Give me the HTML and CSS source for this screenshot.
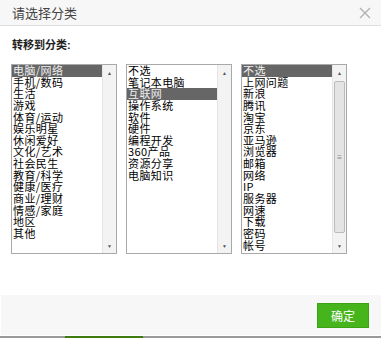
FILE: index.html
```html
<html>
<head>
<meta charset="utf-8">
<link rel="stylesheet" href="styles.css">
</head>
<body>
<div class="dialog">
	<div class="head">
		<span class="title">请选择分类</span>
		<svg class="close" width="12" height="12" viewBox="0 0 12 12"><path d="M1 1L11 11M11 1L1 11" stroke="#b0b0b0" stroke-width="1.3" fill="none"/></svg>
	</div>
	<div class="main">
		<div class="label">转移到分类:</div>
		<div class="lists">
			<div class="box">
				<div class="items">
					<div class="item sel">电脑/网络</div>
					<div class="item">手机/数码</div>
					<div class="item">生活</div>
					<div class="item">游戏</div>
					<div class="item">体育/运动</div>
					<div class="item">娱乐明星</div>
					<div class="item">休闲爱好</div>
					<div class="item">文化/艺术</div>
					<div class="item">社会民生</div>
					<div class="item">教育/科学</div>
					<div class="item">健康/医疗</div>
					<div class="item">商业/理财</div>
					<div class="item">情感/家庭</div>
					<div class="item">地区</div>
					<div class="item">其他</div>
				</div>
				<div class="bar">
					<div class="arr up">&#9650;</div>
					<div class="track"></div>
					<div class="arr">&#9660;</div>
				</div>
			</div>
			<div class="box">
				<div class="items">
					<div class="item">不选</div>
					<div class="item">笔记本电脑</div>
					<div class="item sel">互联网</div>
					<div class="item">操作系统</div>
					<div class="item">软件</div>
					<div class="item">硬件</div>
					<div class="item">编程开发</div>
					<div class="item">360产品</div>
					<div class="item">资源分享</div>
					<div class="item">电脑知识</div>
				</div>
				<div class="bar">
					<div class="arr up">&#9650;</div>
					<div class="track"></div>
					<div class="arr">&#9660;</div>
				</div>
			</div>
			<div class="box">
				<div class="items">
					<div class="item sel">不选</div>
					<div class="item">上网问题</div>
					<div class="item">新浪</div>
					<div class="item">腾讯</div>
					<div class="item">淘宝</div>
					<div class="item">京东</div>
					<div class="item">亚马逊</div>
					<div class="item">浏览器</div>
					<div class="item">邮箱</div>
					<div class="item">网络</div>
					<div class="item">IP</div>
					<div class="item">服务器</div>
					<div class="item">网速</div>
					<div class="item">下载</div>
					<div class="item">密码</div>
					<div class="item">帐号</div>
				</div>
				<div class="bar">
					<div class="arr up">&#9650;</div>
					<div class="track"><div class="thumb"><span class="grip">&#8801;</span></div></div>
					<div class="arr">&#9660;</div>
				</div>
			</div>
		</div>
	</div>
	<div class="foot">
		<span class="ok">确定</span>
	</div>
	<div class="under"><span class="green"></span></div>
</div>
</body>
</html>
```

FILE: styles.css
```css
body {
	margin: 0;
	background-color: #fff;
	font-family: "Liberation Sans", "Noto Sans CJK SC", sans-serif;
}
.dialog {
	width: 381px;
	height: 338px;
	display: flex;
	flex-direction: column;
	overflow: hidden;
}
.head {
	height: 25px;
	background-color: #f7f7f7;
	border-bottom: 1px solid #dedede;
	display: flex;
	align-items: center;
	justify-content: space-between;
	padding: 0 10px 0 12px;
}
.title {
	font-size: 13px;
	color: #444;
}
.main {
	flex: 1;
	padding: 0 0 0 11px;
}
.label {
	font-size: 11px;
	font-weight: bold;
	color: #222;
	margin: 13px 0 0 1px;
	height: 13px;
	line-height: 13px;
}
.lists {
	display: flex;
	gap: 9px;
	margin-top: 12px;
}
.box {
	width: 106px;
	height: 190px;
	box-sizing: border-box;
	border: 1px solid #a9a9a9;
	display: flex;
	background-color: #fff;
}
.items {
	flex: 1;
	overflow: hidden;
	font-family: "Noto Sans CJK SC", sans-serif;
	font-size: 11px;
	letter-spacing: 0.4px;
	color: #000;
}
.item {
	height: 11.65px;
	line-height: 11.65px;
	white-space: nowrap;
	padding-left: 1px;
}
.item.sel {
	background-color: #666;
	color: #eee;
}
.bar {
	width: 13px;
	background-color: #f3f3f3;
	border-left: 1px solid #e6e6e6;
	display: flex;
	flex-direction: column;
}
.arr {
	height: 15px;
	font-size: 5px;
	color: #555;
	display: flex;
	align-items: center;
	justify-content: center;
}
.track {
	flex: 1;
	display: flex;
	padding: 1px 1px;
}
.thumb {
	flex: 1;
	margin-bottom: 4px;
	background-color: #e4e4e4;
	border: 1px solid #bcbcbc;
	border-radius: 2px;
	display: flex;
	align-items: center;
	justify-content: center;
}
.grip {
	font-size: 8px;
	color: #888;
}
.foot {
	height: 40px;
	margin: 0 0 0 1px;
	background-color: #f7f7f7;
	display: flex;
	align-items: center;
	justify-content: flex-end;
	padding-right: 12px;
}
.ok {
	width: 52px;
	height: 25px;
	box-sizing: border-box;
	background-color: #46b51c;
	border: 1px solid #3ea215;
	color: #fff;
	font-size: 12px;
	display: flex;
	align-items: center;
	justify-content: center;
}
.under {
	height: 2px;
	margin-top: 1px;
	background-color: #999;
	padding-left: 65px;
}
.green {
	display: block;
	width: 78px;
	height: 2px;
	background-color: #3d7a10;
}
```
